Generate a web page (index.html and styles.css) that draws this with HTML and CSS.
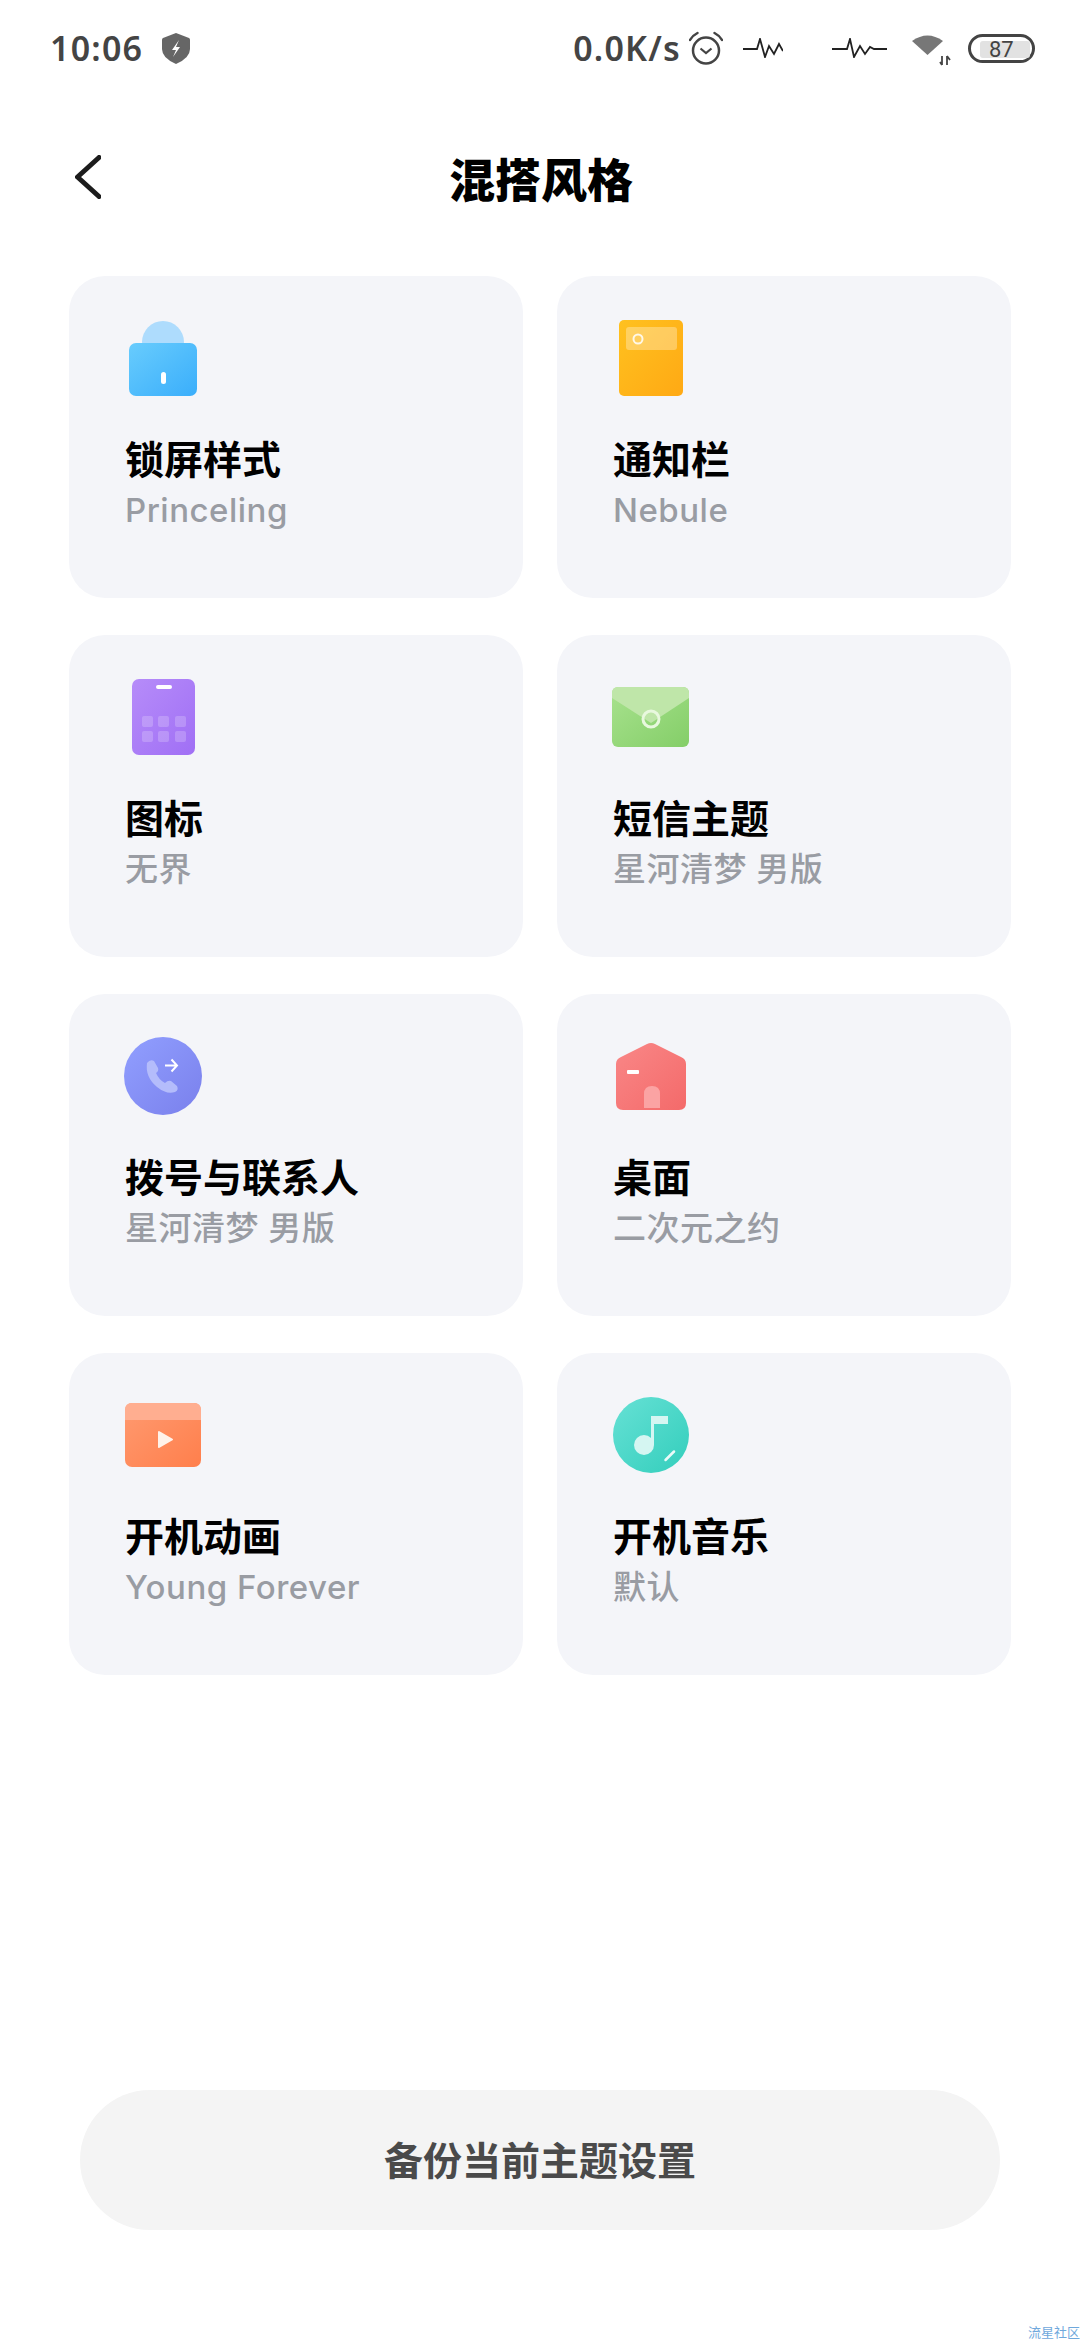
FILE: index.html
```html
<!DOCTYPE html>
<html lang="zh-CN">
<head>
    <meta charset="UTF-8">
    <meta name="viewport" content="width=device-width, initial-scale=1.0">
    <title>混搭风格</title>
    <link rel="stylesheet" href="styles.css">
</head>
<body>
    <div class="page">
        <div class="status-bar">
            <span class="clock">10:06</span>
            <svg class="shield" width="28" height="31" viewBox="0 0 28 31">
                <path d="M14 0 L27 5 Q28 5.500 28 7 L28 16 Q28 25 14 31 Q0 25 0 16 L0 7 Q0 5.500 1 5 Z" fill="#666"/>
                <path d="M17 7 L10 17 L14 17 L11 24 L18 14 L14 14 Z" fill="#fff"/>
            </svg>
            <div class="status-right">
                <span class="speed">0.0K/s</span>
                <svg class="alarm" width="34" height="34" viewBox="0 0 34 34" fill="none" stroke="#444" stroke-width="2.500">
                    <circle cx="17" cy="19.500" r="13"/>
                    <path d="M11.500 17.500 L17 22 L22.500 17.500" stroke-width="2.200"/>
                    <path d="M1 9 Q3.500 4.500 8.500 2" stroke-linecap="round"/>
                    <path d="M33 9 Q30.500 4.500 25.500 2" stroke-linecap="round"/>
                </svg>
                <svg class="wave-short" width="40" height="20" viewBox="0 0 40 20" fill="none" stroke="#222" stroke-width="1.800">
                    <polyline points="0,11 14,11 17,1 22,19 26,8 31,16 36,6 40,13"/>
                </svg>
                <svg class="wave-long" width="55" height="20" viewBox="0 0 55 20" fill="none" stroke="#222" stroke-width="1.800">
                    <polyline points="0,11 15,11 18,1 22,19 28,8 33,16 38,9 42,11 55,11"/>
                </svg>
                <svg class="wifi" width="40" height="33" viewBox="0 0 40 33">
                    <path d="M0 8 Q15.500 -3 31 8 L15.500 22 Z" fill="#777"/>
                    <path d="M30 23 L30 32 M28 29 L30 32 M35 32 L35 23 M35 23 L38 27" stroke="#444" stroke-width="1.800" fill="none"/>
                </svg>
                <div class="battery"><span class="battery-level">87</span></div>
            </div>
        </div>

        <div class="header">
            <svg class="back" width="26" height="44" viewBox="0 0 26 44" fill="none" stroke="#1c1c1c" stroke-width="5" stroke-linecap="round" stroke-linejoin="round">
                <polyline points="24,2.500 2.500,22 24,41.500"/>
            </svg>
            <h1 class="title">混搭风格</h1>
        </div>

        <div class="grid">
            <div class="card">
                <svg class="card-icon" viewBox="0 0 100 100">
                    <defs><linearGradient id="lock-fill" x1="0" y1="0" x2="1" y2="1"><stop offset="0" stop-color="#68ccfd"/><stop offset="1" stop-color="#3aaefb"/></linearGradient></defs>
                    <circle cx="46" cy="30" r="21" fill="#aedcfd"/>
                    <rect x="12" y="31" width="68" height="53" rx="7" fill="url(#lock-fill)"/>
                    <rect x="44" y="60" width="5" height="12" rx="2.500" fill="#fff"/>
                </svg>
                <div class="card-name">锁屏样式</div>
                <div class="card-value">Princeling</div>
            </div>
            <div class="card">
                <svg class="card-icon" viewBox="0 0 100 100">
                    <defs><linearGradient id="bar-fill" x1="0" y1="0" x2="1" y2="1"><stop offset="0" stop-color="#ffc11f"/><stop offset="1" stop-color="#ffa914"/></linearGradient></defs>
                    <rect x="14" y="8" width="64" height="76" rx="5" fill="url(#bar-fill)"/>
                    <rect x="21" y="15" width="51" height="23" rx="3" fill="#fff" opacity="0.3"/>
                    <circle cx="33" cy="27" r="4.500" fill="none" stroke="#fff" stroke-width="2" opacity="0.85"/>
                </svg>
                <div class="card-name">通知栏</div>
                <div class="card-value">Nebule</div>
            </div>
            <div class="card">
                <svg class="card-icon" viewBox="0 0 100 100">
                    <defs><linearGradient id="icons-fill" x1="0" y1="0" x2="1" y2="1"><stop offset="0" stop-color="#b68cf9"/><stop offset="1" stop-color="#a06ff5"/></linearGradient></defs>
                    <rect x="15" y="8" width="63" height="76" rx="7" fill="url(#icons-fill)"/>
                    <rect x="39" y="14" width="16" height="4" rx="2" fill="#fff"/>
                    <g fill="#fff" opacity="0.2">
                        <rect x="25" y="45" width="11" height="11" rx="2"/>
                        <rect x="41" y="45" width="11" height="11" rx="2"/>
                        <rect x="58" y="45" width="11" height="11" rx="2"/>
                        <rect x="25" y="60" width="11" height="11" rx="2"/>
                        <rect x="41" y="60" width="11" height="11" rx="2"/>
                        <rect x="58" y="60" width="11" height="11" rx="2"/>
                    </g>
                </svg>
                <div class="card-name">图标</div>
                <div class="card-value">无界</div>
            </div>
            <div class="card">
                <svg class="card-icon" viewBox="0 0 100 100">
                    <defs><linearGradient id="sms-fill" x1="0" y1="0" x2="1" y2="1"><stop offset="0" stop-color="#a8e28e"/><stop offset="1" stop-color="#84ce68"/></linearGradient></defs>
                    <rect x="7" y="16" width="77" height="60" rx="6" fill="url(#sms-fill)"/>
                    <path d="M7 27 L7 22 Q7 16 13 16 L78 16 Q84 16 84 22 L84 27 L46 52 Z" fill="#bfe6a9"/>
                    <circle cx="46" cy="48" r="8" fill="none" stroke="#e8f8de" stroke-width="3"/>
                </svg>
                <div class="card-name">短信主题</div>
                <div class="card-value">星河清梦 男版</div>
            </div>
            <div class="card">
                <svg class="card-icon" viewBox="0 0 100 100">
                    <defs><linearGradient id="dial-fill" x1="0" y1="0" x2="1" y2="1"><stop offset="0" stop-color="#919fff"/><stop offset="1" stop-color="#7a80ec"/></linearGradient></defs>
                    <circle cx="46" cy="46" r="39" fill="url(#dial-fill)"/>
                    <path d="M30 33 Q33 29 37 31 L41 38 Q42 41 39 43 Q42 50 48 53 Q51 50 54 51 L60 56 Q62 60 58 62 Q50 65 40 57 Q28 47 30 33 Z" fill="#b4bcfb"/>
                    <path d="M48 35.500 L60 35.500 M54.500 29.500 L60 35.500 L54.500 41.500" fill="none" stroke="#fff" stroke-width="2"/>
                </svg>
                <div class="card-name">拨号与联系人</div>
                <div class="card-value">星河清梦 男版</div>
            </div>
            <div class="card">
                <svg class="card-icon" viewBox="0 0 100 100">
                    <defs><linearGradient id="home-fill" x1="0" y1="0" x2="1" y2="1"><stop offset="0" stop-color="#f98787"/><stop offset="1" stop-color="#f46a6a"/></linearGradient></defs>
                    <path d="M42 14 Q46 12 50 14 L76 27 Q81 29 81 34 L81 73 Q81 80 74 80 L18 80 Q11 80 11 73 L11 34 Q11 29 16 27 Z" fill="url(#home-fill)"/>
                    <path d="M39 78 L39 64 Q39 56 47 56 Q55 56 55 64 L55 78 Z" fill="#fba3a3"/>
                    <rect x="22" y="40" width="12" height="4" rx="1" fill="#fff"/>
                </svg>
                <div class="card-name">桌面</div>
                <div class="card-value">二次元之约</div>
            </div>
            <div class="card">
                <svg class="card-icon" viewBox="0 0 100 100">
                    <defs><linearGradient id="boot-fill" x1="0" y1="0" x2="1" y2="1"><stop offset="0" stop-color="#ff9a70"/><stop offset="1" stop-color="#ff7f4c"/></linearGradient></defs>
                    <rect x="8" y="14" width="76" height="64" rx="7" fill="url(#boot-fill)"/>
                    <path d="M8 31 L8 21 Q8 14 15 14 L77 14 Q84 14 84 21 L84 31 Z" fill="#ffae90"/>
                    <path d="M42 43 L55 50.500 L42 58 Z" fill="#fff2ea" stroke="#fff2ea" stroke-width="2" stroke-linejoin="round"/>
                </svg>
                <div class="card-name">开机动画</div>
                <div class="card-value">Young Forever</div>
            </div>
            <div class="card">
                <svg class="card-icon" viewBox="0 0 100 100">
                    <defs><linearGradient id="music-fill" x1="0" y1="0" x2="1" y2="1"><stop offset="0" stop-color="#66e1d5"/><stop offset="1" stop-color="#33cebc"/></linearGradient></defs>
                    <circle cx="46" cy="46" r="38" fill="url(#music-fill)"/>
                    <circle cx="39" cy="56" r="10" fill="#d5f6f2"/>
                    <path d="M46 56 L46 27 L63 27 L63 35 L49 35 L49 56 Z" fill="#d5f6f2"/>
                    <path d="M60.500 71 L69 62.500" stroke="#eafbf9" stroke-width="2.500" stroke-linecap="round"/>
                </svg>
                <div class="card-name">开机音乐</div>
                <div class="card-value">默认</div>
            </div>
        </div>

        <button class="backup">备份当前主题设置</button>
        <span class="watermark">流星社区</span>
    </div>
</body>
</html>
```

FILE: styles.css
```css
* {
    box-sizing: border-box;
}
body {
    margin: 0;
    background-color: #fff;
    font-family: "Noto Sans", "Noto Sans CJK SC", sans-serif;
}
.page {
    position: relative;
    display: flex;
    flex-direction: column;
    height: 2340px;
    overflow: hidden;
}
.status-bar {
    display: flex;
    align-items: center;
    height: 96px;
    padding: 0 45px 0 50px;
    color: #444;
    font-size: 34px;
    font-weight: 600;
    letter-spacing: 1.200px;
}
.shield {
    margin-left: 19px;
}
.status-right {
    display: flex;
    align-items: center;
    margin-left: auto;
}
.alarm {
    margin-left: 8px;
}
.wave-short {
    margin-left: 20px;
}
.wave-long {
    margin-left: 49px;
}
.wifi {
    margin-left: 25px;
    margin-top: 2px;
}
.battery {
    display: flex;
    width: 67px;
    height: 29px;
    margin-left: 16px;
    padding: 4px 2px 2px 9px;
    border: 3px solid #444;
    border-radius: 15px;
    letter-spacing: 0;
}
.battery-level {
    flex: 1;
    height: 17px;
    padding-left: 9px;
    border-radius: 3px;
    background-color: #e2e2e2;
    color: #444;
    font-family: Roboto, sans-serif;
    font-size: 22px;
    font-weight: 400;
    line-height: 17px;
}
.header {
    display: grid;
    grid-template-columns: 1fr auto 1fr;
    align-items: center;
    height: 100px;
    margin-top: 31px;
}
.back {
    margin-left: 75px;
}
.title {
    margin: 0 0 0 2px;
    color: #000;
    font-family: "Noto Sans CJK SC", sans-serif;
    font-size: 46px;
    font-weight: 900;
    line-height: 60px;
}
.grid {
    display: grid;
    grid-template-columns: 454px 454px;
    grid-auto-rows: 322px;
    gap: 37px 34px;
    margin: 49px 69px 0;
}
.card {
    padding: 36px 0 0 56px;
    border-radius: 36px;
    background-color: #f4f5f9;
}
.card-icon {
    display: block;
    width: 100px;
    height: 100px;
    margin-left: -8px;
}
.card-name {
    margin-top: 19px;
    color: #000;
    font-family: "Noto Sans CJK SC", sans-serif;
    font-size: 39px;
    font-weight: 700;
    line-height: 52px;
}
.card-value {
    margin-top: 5px;
    color: #999ca3;
    font-family: Inter, "Noto Sans CJK SC", sans-serif;
    font-size: 33px;
    font-weight: 500;
    letter-spacing: 0.500px;
    line-height: 44px;
}
.backup {
    height: 140px;
    margin: auto 80px 110px;
    padding-bottom: 5px;
    border: 0;
    border-radius: 70px;
    background-color: #f4f4f4;
    color: #4a4a4a;
    font-family: "Noto Sans CJK SC", sans-serif;
    font-size: 39px;
    font-weight: 700;
}
.watermark {
    position: absolute;
    right: 0;
    bottom: 1px;
    color: #6fa8dc;
    font-family: "Noto Sans CJK SC", sans-serif;
    font-size: 13px;
    line-height: 14px;
}
```
